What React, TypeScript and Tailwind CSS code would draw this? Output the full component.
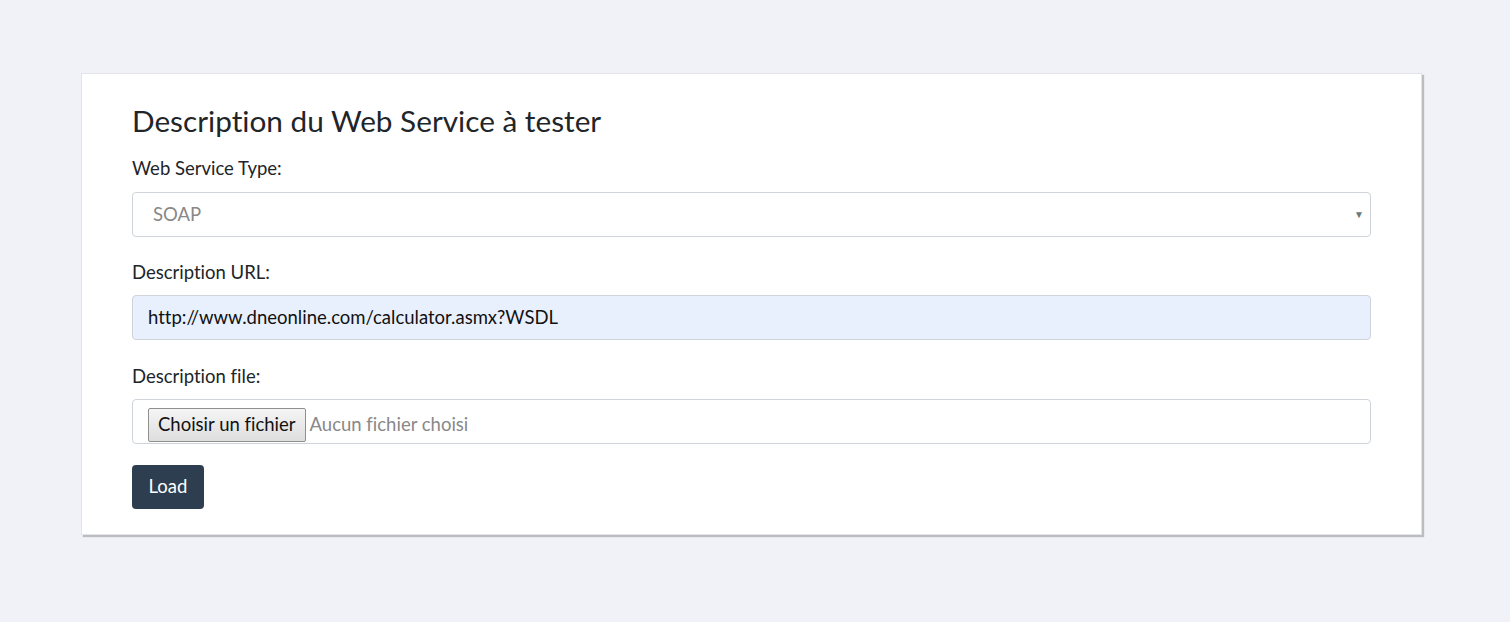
export default function App() {
  return (
    <div className="min-h-screen bg-[#f1f2f7] pt-[73px] font-['Lato',sans-serif] text-[#212529] [font-variant-ligatures:none]">
      <div className="ml-[81px] w-[1341px] bg-white border border-[#e3e4ea] shadow-[2px_2px_1px_rgba(0,0,0,0.22)] px-[50px] pt-[29px] pb-[25px]">
        <h1 className="text-[29.75px] leading-[36px] font-normal">Description du Web Service à tester</h1>

        <label className="block mt-[17px] text-[18.5px] leading-[24px]">Web Service Type:</label>
        <div className="mt-[12px] h-[45px] border border-[#ced4da] rounded-[4px] flex items-center justify-between pl-[20px] pr-[6px] text-[18.5px] text-[#888]">
          <span>SOAP</span>
          <span className="text-[10px] text-[#6b7878]">▼</span>
        </div>

        <label className="block mt-[23px] text-[18.5px] leading-[24px]">Description URL:</label>
        <div className="mt-[11px] h-[45px] border border-[#ced4da] rounded-[4px] bg-[#e8f0fe] flex items-center pl-[15px] text-[18.5px] text-[#111]">
          http://www.dneonline.com/calculator.asmx?WSDL
        </div>

        <label className="block mt-[24px] text-[18.5px] leading-[24px]">Description file:</label>
        <div className="mt-[11px] h-[45px] border border-[#ced4da] rounded-[4px] flex items-start pt-[8px] pl-[15px] text-[18.5px]">
          <span className="h-[34px] px-[9px] flex items-center border border-[#8f8f8f] rounded-[2px] bg-gradient-to-b from-[#f5f5f5] to-[#dedede] text-[#111]">
            Choisir un fichier
          </span>
          <span className="ml-[4px] h-[34px] flex items-center text-[#888]">Aucun fichier choisi</span>
        </div>

        <button className="mt-[21px] h-[44px] px-[16.5px] rounded-[4px] bg-[#2c3e50] text-white text-[18.5px]">Load</button>
      </div>
    </div>
  )
}
